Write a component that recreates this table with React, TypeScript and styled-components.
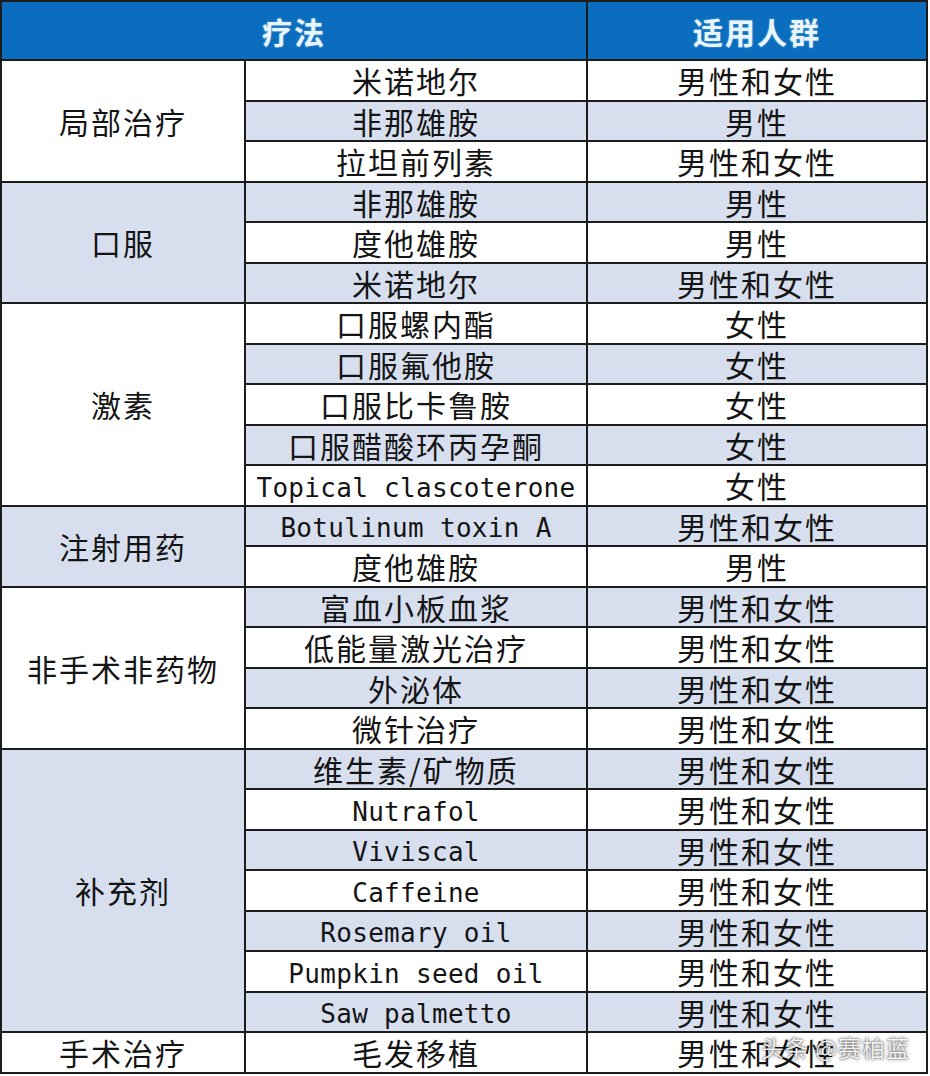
import React from 'react';
import styled, { createGlobalStyle } from 'styled-components';

const GlobalStyle = createGlobalStyle`
  html, body {
    margin: 0;
    padding: 0;
    background: #ffffff;
  }
  body {
    font-family: "Noto Sans CJK SC", "Noto Sans", sans-serif;
  }
`;

type Group = {
  name: string;
  items: { drug: string; people: string }[];
};

const BOTH = '男性和女性';
const MALE = '男性';
const FEMALE = '女性';

const groups: Group[] = [
  {
    name: '局部治疗',
    items: [
      { drug: '米诺地尔', people: BOTH },
      { drug: '非那雄胺', people: MALE },
      { drug: '拉坦前列素', people: BOTH },
    ],
  },
  {
    name: '口服',
    items: [
      { drug: '非那雄胺', people: MALE },
      { drug: '度他雄胺', people: MALE },
      { drug: '米诺地尔', people: BOTH },
    ],
  },
  {
    name: '激素',
    items: [
      { drug: '口服螺内酯', people: FEMALE },
      { drug: '口服氟他胺', people: FEMALE },
      { drug: '口服比卡鲁胺', people: FEMALE },
      { drug: '口服醋酸环丙孕酮', people: FEMALE },
      { drug: 'Topical clascoterone', people: FEMALE },
    ],
  },
  {
    name: '注射用药',
    items: [
      { drug: 'Botulinum toxin A', people: BOTH },
      { drug: '度他雄胺', people: MALE },
    ],
  },
  {
    name: '非手术非药物',
    items: [
      { drug: '富血小板血浆', people: BOTH },
      { drug: '低能量激光治疗', people: BOTH },
      { drug: '外泌体', people: BOTH },
      { drug: '微针治疗', people: BOTH },
    ],
  },
  {
    name: '补充剂',
    items: [
      { drug: '维生素/矿物质', people: BOTH },
      { drug: 'Nutrafol', people: BOTH },
      { drug: 'Viviscal', people: BOTH },
      { drug: 'Caffeine', people: BOTH },
      { drug: 'Rosemary oil', people: BOTH },
      { drug: 'Pumpkin seed oil', people: BOTH },
      { drug: 'Saw palmetto', people: BOTH },
    ],
  },
  {
    name: '手术治疗',
    items: [{ drug: '毛发移植', people: BOTH }],
  },
];

const totalRows = groups.reduce((n, g) => n + g.items.length, 0);

const Page = styled.div`
  position: relative;
  width: 930px;
  height: 1076px;
  background: #ffffff;
`;

const Table = styled.div<{ $rows: number }>`
  display: grid;
  grid-template-columns: 242px 340px 338px;
  grid-template-rows: 57px repeat(${(p) => p.$rows}, 38.5px);
  gap: 2px;
  padding: 2px;
  width: 928px;
  box-sizing: border-box;
  background: #1c1c1c;
`;

const HeadCell = styled.div<{ $span?: number }>`
  grid-column: span ${(p) => p.$span ?? 1};
  display: flex;
  align-items: center;
  justify-content: center;
  background: #0b6dbd;
  color: #e9f5fc;
  font-size: 30px;
  font-weight: 700;
  letter-spacing: 2px;
  text-shadow: 0 0 2px rgba(180, 225, 255, 0.6);
`;

const Cell = styled.div<{ $shade: boolean; $latin?: boolean }>`
  display: flex;
  align-items: center;
  justify-content: center;
  box-sizing: border-box;
  padding-top: ${(p) => (p.$latin ? '5px' : '0')};
  background: ${(p) => (p.$shade ? '#d7dfef' : '#ffffff')};
  color: #141414;
  font-family: ${(p) =>
    p.$latin ? '"DejaVu Sans Mono", monospace' : '"Noto Sans CJK SC", sans-serif'};
  font-size: ${(p) => (p.$latin ? '26px' : '30px')};
  letter-spacing: ${(p) => (p.$latin ? '0.3px' : '2px')};
  white-space: nowrap;
  line-height: 1;
`;

const GroupCell = styled(Cell)<{ $start: number; $len: number }>`
  grid-column: 1;
  grid-row: ${(p) => p.$start} / span ${(p) => p.$len};
`;

const Watermark = styled.div`
  position: absolute;
  right: 20px;
  bottom: 12px;
  color: rgba(255, 255, 255, 0.92);
  font-size: 23px;
  letter-spacing: 1px;
  text-shadow: 0 0 2px rgba(0, 0, 0, 0.7), 0 0 4px rgba(0, 0, 0, 0.4);
`;

const isLatin = (s: string) => /^[A-Za-z ]+$/.test(s);

const App = () => {
  let row = 2;
  let idx = 0;
  const cells: React.ReactNode[] = [];

  groups.forEach((g, gi) => {
    const start = row;
    cells.push(
      <GroupCell key={`g${gi}`} $shade={gi % 2 === 1} $start={start} $len={g.items.length}>
        {g.name}
      </GroupCell>
    );
    g.items.forEach((it, ii) => {
      const shade = idx % 2 === 1;
      const r = row;
      cells.push(
        <Cell
          key={`d${gi}-${ii}`}
          $shade={shade}
          $latin={isLatin(it.drug)}
          style={{ gridColumn: 2, gridRow: r }}
        >
          {it.drug}
        </Cell>
      );
      cells.push(
        <Cell key={`p${gi}-${ii}`} $shade={shade} style={{ gridColumn: 3, gridRow: r }}>
          {it.people}
        </Cell>
      );
      row += 1;
      idx += 1;
    });
  });

  return (
    <Page>
      <GlobalStyle />
      <Table $rows={totalRows}>
        <HeadCell $span={2}>疗法</HeadCell>
        <HeadCell>适用人群</HeadCell>
        {cells}
      </Table>
      <Watermark>头条 @赛柏蓝</Watermark>
    </Page>
  );
};

export default App;
